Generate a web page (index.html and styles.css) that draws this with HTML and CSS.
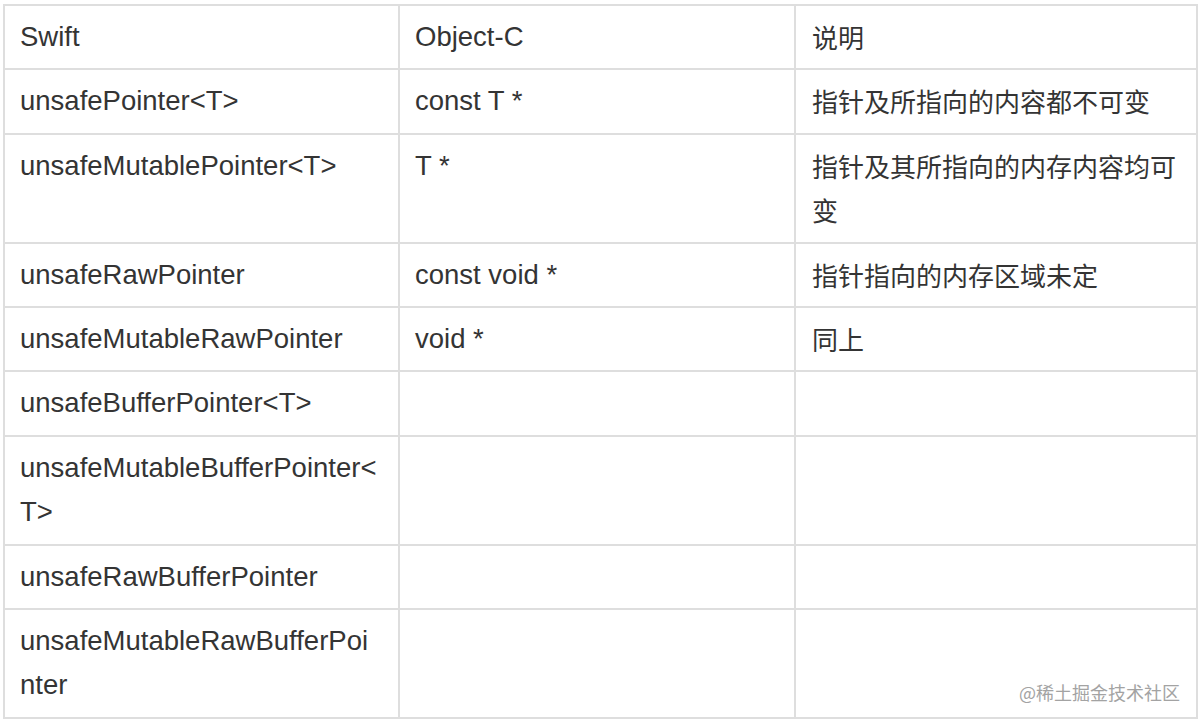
FILE: index.html
```html
<!DOCTYPE html>
<html lang="zh-CN">
<head>
<meta charset="utf-8">
<title>Swift 指针</title>
<link rel="stylesheet" href="styles.css">
</head>
<body>
<div class="page">
  <table class="ptr-table">
    <colgroup>
      <col class="c1">
      <col class="c2">
      <col class="c3">
    </colgroup>
    <tbody>
      <tr><td>Swift</td><td>Object-C</td><td class="zh">说明</td></tr>
      <tr><td>unsafePointer&lt;T&gt;</td><td>const T *</td><td class="zh">指针及所指向的内容都不可变</td></tr>
      <tr><td>unsafeMutablePointer&lt;T&gt;</td><td>T *</td><td class="zh">指针及其所指向的内存内容均可变</td></tr>
      <tr><td>unsafeRawPointer</td><td>const void *</td><td class="zh">指针指向的内存区域未定</td></tr>
      <tr><td>unsafeMutableRawPointer</td><td>void *</td><td class="zh">同上</td></tr>
      <tr><td>unsafeBufferPointer&lt;T&gt;</td><td></td><td class="zh"></td></tr>
      <tr><td>unsafeMutableBufferPointer&lt;T&gt;</td><td></td><td class="zh"></td></tr>
      <tr><td>unsafeRawBufferPointer</td><td></td><td class="zh"></td></tr>
      <tr><td>unsafeMutableRawBufferPointer</td><td></td><td class="zh"></td></tr>
    </tbody>
  </table>
  <div class="watermark">@稀土掘金技术社区</div>
</div>
</body>
</html>
```
FILE: styles.css
```css
html, body {
  margin: 0;
  padding: 0;
  background: #ffffff;
}

.page {
  position: relative;
  width: 1200px;
  height: 723px;
  padding: 4px 0 0 3px;
  box-sizing: border-box;
  overflow: hidden;
}

.ptr-table {
  border-collapse: collapse;
  table-layout: fixed;
  width: 1193px;
  border: 2px solid #dedede;
  font-family: "Liberation Sans", "Noto Sans CJK SC", sans-serif;
  font-size: 27.5px;
  color: #343434;
}

.c1 { width: 395px; }
.c2 { width: 396px; }
.c3 { width: 402px; }

.ptr-table td {
  border: 2px solid #dedede;
  padding: 9px 18px 9px 15px;
  line-height: 44.4px;
  vertical-align: top;
  text-align: left;
  word-break: break-all;
}

.ptr-table td.zh {
  font-family: "Noto Sans CJK SC", "Liberation Sans", sans-serif;
  font-size: 26px;
  padding-left: 16px;
  padding-right: 14px;
}

.watermark {
  position: absolute;
  right: 20px;
  top: 681px;
  font-family: "Noto Sans CJK SC", sans-serif;
  font-size: 18px;
  line-height: 22px;
  color: #a3a3a3;
}
```
